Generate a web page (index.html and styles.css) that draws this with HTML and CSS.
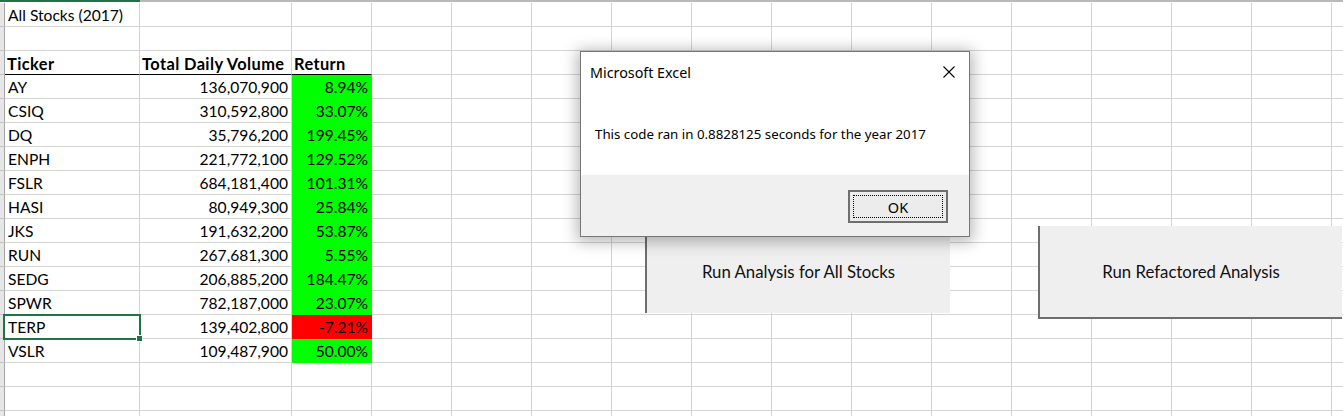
FILE: index.html
```html
<!DOCTYPE html>
<html>
<head>
<meta charset="utf-8">
<title>All Stocks (2017)</title>
<link rel="stylesheet" href="styles.css">
</head>
<body>
<div class="sheet">
  <div class="colhdr"><span class="hsel"></span><span class="hrest"></span></div>
  <div class="row"><div class="rh"></div><div class="c">All Stocks (2017)</div><div class="c"></div><div class="c"></div><div class="fill"></div></div>
  <div class="row"><div class="rh"></div><div class="c"></div><div class="c"></div><div class="c"></div><div class="fill"></div></div>
  <div class="row head"><div class="rh"></div><div class="c b">Ticker</div><div class="c b">Total Daily Volume</div><div class="c b">Return</div><div class="fill"></div></div>
  <div class="row"><div class="rh"></div><div class="c">AY</div><div class="c num">136,070,900</div><div class="c num up">8.94%</div><div class="fill"></div></div>
  <div class="row"><div class="rh"></div><div class="c">CSIQ</div><div class="c num">310,592,800</div><div class="c num up">33.07%</div><div class="fill"></div></div>
  <div class="row"><div class="rh"></div><div class="c">DQ</div><div class="c num">35,796,200</div><div class="c num up">199.45%</div><div class="fill"></div></div>
  <div class="row"><div class="rh"></div><div class="c">ENPH</div><div class="c num">221,772,100</div><div class="c num up">129.52%</div><div class="fill"></div></div>
  <div class="row"><div class="rh"></div><div class="c">FSLR</div><div class="c num">684,181,400</div><div class="c num up">101.31%</div><div class="fill"></div></div>
  <div class="row"><div class="rh"></div><div class="c">HASI</div><div class="c num">80,949,300</div><div class="c num up">25.84%</div><div class="fill"></div></div>
  <div class="row"><div class="rh"></div><div class="c">JKS</div><div class="c num">191,632,200</div><div class="c num up">53.87%</div><div class="fill"></div></div>
  <div class="row"><div class="rh"></div><div class="c">RUN</div><div class="c num">267,681,300</div><div class="c num up">5.55%</div><div class="fill"></div></div>
  <div class="row"><div class="rh"></div><div class="c">SEDG</div><div class="c num">206,885,200</div><div class="c num up">184.47%</div><div class="fill"></div></div>
  <div class="row"><div class="rh"></div><div class="c">SPWR</div><div class="c num">782,187,000</div><div class="c num up">23.07%</div><div class="fill"></div></div>
  <div class="row"><div class="rh"></div><div class="c active">TERP</div><div class="c num">139,402,800</div><div class="c num down">-7.21%</div><div class="fill"></div></div>
  <div class="row"><div class="rh"></div><div class="c">VSLR</div><div class="c num">109,487,900</div><div class="c num up">50.00%</div><div class="fill"></div></div>
  <div class="row"><div class="rh"></div><div class="c"></div><div class="c"></div><div class="c"></div><div class="fill"></div></div>
  <div class="row"><div class="rh"></div><div class="c"></div><div class="c"></div><div class="c"></div><div class="fill"></div></div>
  <div class="row"><div class="rh"></div><div class="c"></div><div class="c"></div><div class="c"></div><div class="fill"></div></div>
</div>

<button class="btn btn-all">Run Analysis for All Stocks</button>
<button class="btn btn-refactor">Run Refactored Analysis</button>

<div class="dialog">
  <div class="dlg-title">
    <span>Microsoft Excel</span>
    <svg class="dlg-close" width="12" height="12" viewBox="0 0 12 12"><path d="M0.5 0.5 L11.5 11.5 M11.5 0.5 L0.5 11.5" stroke="#000" stroke-width="1.1" fill="none"/></svg>
  </div>
  <div class="dlg-body">This code ran in 0.8828125 seconds for the year 2017</div>
  <div class="dlg-foot"><button class="dlg-ok">OK</button></div>
</div>
</body>
</html>
```

FILE: styles.css
```css
html, body {
  margin: 0;
  padding: 0;
  background: #ffffff;
  overflow: hidden;
}
body {
  width: 1343px;
  height: 416px;
  position: relative;
}
.sheet {
  display: flex;
  flex-direction: column;
  font-family: "Lato", "Liberation Sans", sans-serif;
  font-size: 15.6px;
  color: #000;
}
.colhdr {
  display: grid;
  grid-template-columns: 140px 1fr;
  height: 3px;
}
.hsel {
  border-top: 2px solid #217346;
}
.hrest {
  border-top: 2px solid #b9b9b9;
}
.row {
  display: grid;
  grid-template-columns: 5px 135px 152px 80px 1fr;
  height: 24px;
}
.row > * {
  box-sizing: border-box;
  border-bottom: 1px solid #d4d4d4;
}
.rh {
  background: #e6e6e6;
  border-right: 1px solid #a6a6a6;
  border-bottom-color: #c4c4c4 !important;
}
.c {
  border-right: 1px solid #d4d4d4;
  padding: 2px 3px 0;
  line-height: 21px;
  white-space: nowrap;
  position: relative;
}
.fill {
  background: repeating-linear-gradient(90deg, transparent 0 79px, #d4d4d4 79px 80px);
}
.b {
  font-weight: 700;
  font-size: 16.4px;
  letter-spacing: 0.4px;
  padding-left: 2px;
}
.head .c {
  border-bottom-color: #000;
}
.num {
  text-align: right;
}
.up {
  background: #00ff00;
  border-right-color: #00ff00;
  border-bottom-color: #00ff00;
}
.down {
  background: #ff0000;
  border-right-color: #ff0000;
  border-bottom-color: #ff0000;
}
.active::after {
  content: "";
  position: absolute;
  left: -2px;
  top: -1px;
  right: -2px;
  bottom: -2px;
  border: 2px solid #217346;
}
.active::before {
  content: "";
  position: absolute;
  right: -4px;
  bottom: -4px;
  width: 5px;
  height: 5px;
  background: #217346;
  border: 1px solid #fff;
  z-index: 1;
}

.btn {
  position: absolute;
  background: #efefef;
  border: none;
  margin: 0;
  padding: 0;
  font-family: "Lato", "Liberation Sans", sans-serif;
  font-size: 16.8px;
  color: #111;
  box-sizing: border-box;
}
.btn-all {
  left: 645px;
  top: 229px;
  width: 305px;
  height: 84px;
  border-left: 2px solid #6e6e6e;
}
.btn-refactor {
  left: 1038px;
  top: 226px;
  width: 304px;
  height: 93px;
  border-left: 2px solid #6e6e6e;
  border-bottom: 2px solid #6e6e6e;
}

.dialog {
  position: absolute;
  left: 580px;
  top: 51px;
  width: 390px;
  height: 186px;
  box-sizing: border-box;
  background: #fff;
  border: 1px solid #777;
  box-shadow: 0 2px 14px 3px rgba(0, 0, 0, 0.28);
  display: flex;
  flex-direction: column;
  font-family: "Noto Sans", "Open Sans", sans-serif;
  color: #000;
  z-index: 5;
}
.dlg-title {
  height: 40px;
  display: flex;
  align-items: center;
  justify-content: space-between;
  padding: 0 14px 0 9px;
  font-size: 14.3px;
}
.dlg-close {
  display: block;
}
.dlg-body {
  flex: 1;
  display: flex;
  align-items: center;
  padding-left: 14px;
  font-size: 13.3px;
}
.dlg-foot {
  height: 61px;
  background: #f0f0f0;
  display: flex;
  justify-content: flex-end;
  align-items: flex-start;
  padding: 15px 21px 0 0;
  box-sizing: border-box;
}
.dlg-ok {
  width: 100px;
  height: 33px;
  margin: 0;
  padding: 0;
  box-sizing: border-box;
  background: #ececec;
  border: 2px solid #6f6f6f;
  font-family: "Noto Sans", "Open Sans", sans-serif;
  font-size: 14.5px;
  color: #000;
  position: relative;
}
.dlg-ok::after {
  content: "";
  position: absolute;
  left: 3px;
  top: 3px;
  right: 3px;
  bottom: 3px;
  border: 1px dotted #000;
}
```
